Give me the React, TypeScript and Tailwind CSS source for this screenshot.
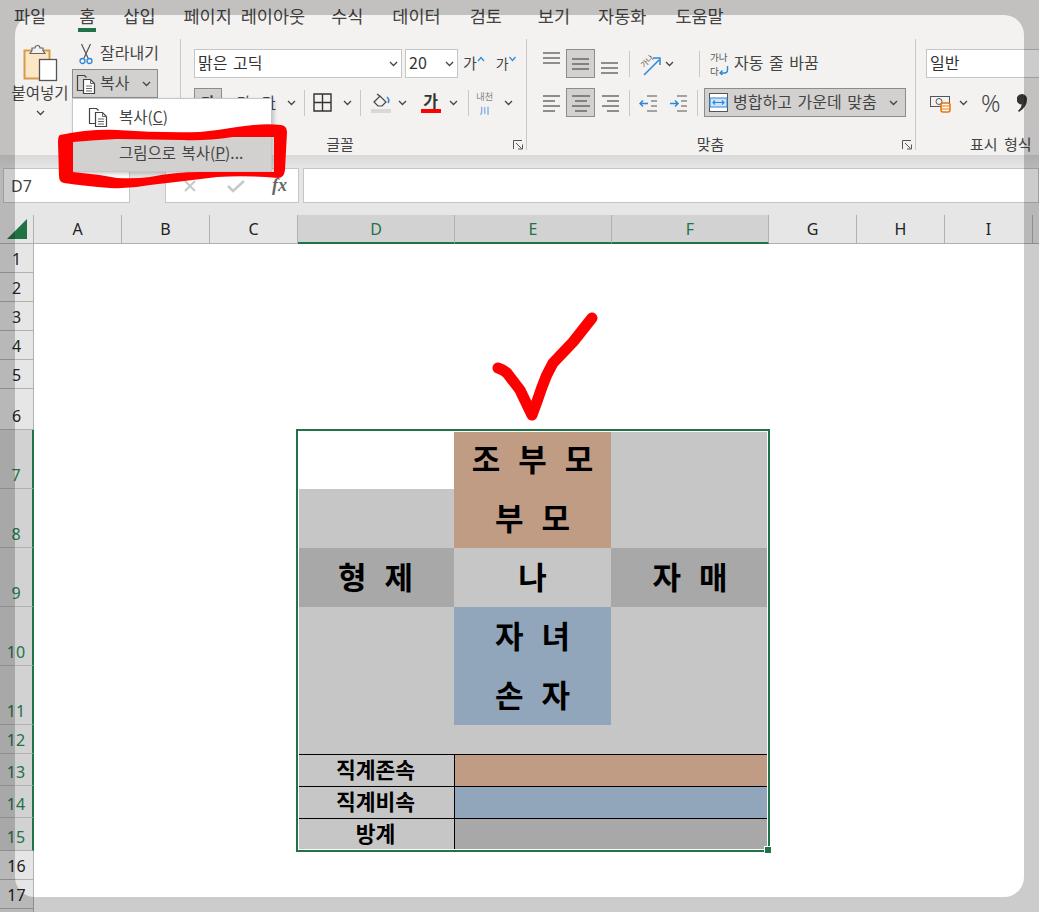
import type { ReactNode } from 'react'

const GREEN = '#217346'

const tabs = [
  { label: '파일', gap: 'ml-0' },
  { label: '홈', gap: 'ml-[33px]' },
  { label: '삽입', gap: 'ml-[28px]' },
  { label: '페이지 레이아웃', gap: 'ml-[28px]' },
  { label: '수식', gap: 'ml-[26px]' },
  { label: '데이터', gap: 'ml-[29px]' },
  { label: '검토', gap: 'ml-[29px]' },
  { label: '보기', gap: 'ml-[36px]' },
  { label: '자동화', gap: 'ml-[28px]' },
  { label: '도움말', gap: 'ml-[29px]' },
]
const columns = ['A', 'B', 'C', 'D', 'E', 'F', 'G', 'H', 'I']
const rowNumbers = [1, 2, 3, 4, 5, 6, 7, 8, 9, 10, 11, 12, 13, 14, 15, 16, 17, 18]

function Chevron({ className = '' }: { className?: string }) {
  return (
    <svg width="9" height="6" viewBox="0 0 9 6" className={`shrink-0 ${className}`}>
      <path d="M1 1l3.5 3.5L8 1" fill="none" stroke="#444" strokeWidth="1.3" />
    </svg>
  )
}

function Lines({ rows, width = 20 }: { rows: number[][]; width?: number }) {
  return (
    <svg width={width} height="20" viewBox={`0 0 ${width} 20`} className="shrink-0">
      {rows.map(([x1, x2, y]) => (
        <line key={`${x1}-${y}`} x1={x1} x2={x2} y1={y} y2={y} stroke="#555" strokeWidth="1.3" />
      ))}
    </svg>
  )
}

function CopyIcon() {
  return (
    <svg width="21" height="20" viewBox="0 0 21 20" className="shrink-0">
      <path d="M7 16.5H1.5V1.5h7l2 2" fill="none" stroke="#444" strokeWidth="1.2" />
      <path d="M7.5 5.5h7l4 4v10h-11z" fill="#fff" stroke="#444" strokeWidth="1.2" />
      <path d="M14.5 5.5v4h4M10 12h6M10 14.500h6M10 17h6" fill="none" stroke="#666" strokeWidth="1" />
    </svg>
  )
}

function PasteIcon() {
  return (
    <svg width="35" height="38" viewBox="0 0 35 38">
      <rect x="1.500" y="6.500" width="25" height="28" fill="#fbe7c3" stroke="#d99a4e" strokeWidth="2" />
      <path d="M9 6.500V4h3a2.500 2.500 0 0 1 5 0h3v2.500l2 3H7z" fill="#f3f2f1" stroke="#666" strokeWidth="1.2" />
      <rect x="16.500" y="15.500" width="17" height="21" fill="#fff" stroke="#555" strokeWidth="1.3" />
    </svg>
  )
}

function ScissorsIcon() {
  return (
    <svg width="14" height="22" viewBox="0 0 14 22" className="shrink-0">
      <path d="M2.500 1l6.500 14M11.500 1L5 15" fill="none" stroke="#555" strokeWidth="1.2" />
      <circle cx="3.500" cy="18" r="2.500" fill="none" stroke="#2b88d8" strokeWidth="1.3" />
      <circle cx="10.500" cy="18" r="2.500" fill="none" stroke="#2b88d8" strokeWidth="1.3" />
    </svg>
  )
}

function Launcher() {
  return (
    <svg width="10" height="10" viewBox="0 0 10 10">
      <path d="M.5 9V.5H9M3 3l5.500 5.500M5 9h4.500V4.500" fill="none" stroke="#555" strokeWidth="1" />
    </svg>
  )
}

function Group({ width, label, labelClass = '', children }: { width: string; label: string; labelClass?: string; children: ReactNode }) {
  return (
    <div className={`flex h-[111px] shrink-0 flex-col border-r border-[#c8c8c8] ${width}`}>
      <div className="flex-1">{children}</div>
      <div className="-mb-[5px] grid grid-cols-[1fr_auto_1fr] items-center pb-[1px] pr-[3px] text-[15px] leading-[20px] text-[#444]">
        <span />
        <span className={labelClass}>{label}</span>
        <span className="flex justify-end pt-[2px]"><Launcher /></span>
      </div>
    </div>
  )
}

function Combo({ width, text, chevron = true }: { width: string; text: string; chevron?: boolean }) {
  return (
    <div className={`flex h-[29px] items-center justify-between border border-[#c6c6c6] bg-white pl-[3px] pr-[3px] text-[16px] text-[#333] ${width}`}>
      <span className="-mt-[3px] [word-spacing:2px]">{text}</span>
      {chevron && <Chevron />}
    </div>
  )
}

function ClipboardGroup() {
  return (
    <Group width="w-[181px]" label="클립보드">
      <div className="flex pt-[5px]">
        <div className="flex w-[72px] flex-col items-center pl-[8px] text-[15.500px] text-[#444]">
          <PasteIcon />
          <span className="-mt-px leading-[22px]">붙여넣기</span>
          <Chevron className="mt-[7px]" />
        </div>
        <div className="flex flex-col">
          <div className="flex h-[25px] items-center gap-[7px] pb-[6px] pl-[7px] text-[16px] text-[#444]">
            <ScissorsIcon />
            <span className="-mt-[4px]">잘라내기</span>
          </div>
          <div className="flex h-[29px] w-[86px] items-center border border-[#8c8c8c] bg-[#d2d1d0] pl-[3px] text-[16px] text-[#444]">
            <CopyIcon />
            <span className="-mt-[3px] ml-[3px]">복사</span>
            <Chevron className="ml-[13px]" />
          </div>
        </div>
      </div>
    </Group>
  )
}

function FontGroup() {
  return (
    <Group width="w-[346px]" label="글꼴" labelClass="-translate-x-[12px]">
      <div className="flex flex-col pl-[13px] pt-[10px]">
        <div className="flex items-center">
          <Combo width="w-[208px]" text="맑은 고딕" />
          <Combo width="ml-[3px] w-[53px]" text="20" />
          <span className="ml-[5px] text-[15px] text-[#444]">가</span>
          <svg width="8" height="6" viewBox="0 0 8 6" className="mb-[10px]"><path d="M1 5l3-3.500 3 3.500" fill="none" stroke="#2b88d8" strokeWidth="1.2" /></svg>
          <span className="ml-[11px] text-[14px] text-[#444]">가</span>
          <svg width="7" height="6" viewBox="0 0 7 6" className="mb-[10px]"><path d="M.5 1l3 3.500 3-3.500" fill="none" stroke="#2b88d8" strokeWidth="1.2" /></svg>
        </div>
        <div className="mt-[10px] flex h-[29px] items-center text-[15px] text-[#444]">
          <div className="flex h-[29px] w-[28px] items-center justify-center border border-[#8c8c8c] bg-[#d2d1d0] font-bold">가</div>
          <span className="ml-[12px] italic">가</span>
          <span className="ml-[14px] underline">가</span>
          <Chevron className="ml-[11px]" />
          <div className="ml-[8px] h-[26px] w-px bg-[#c8c8c8]" />
          <svg width="19" height="19" viewBox="0 0 19 19" className="ml-[8px]">
            <path d="M1 1h17v17H1zM9.500 1v17M1 9.500h17" fill="none" stroke="#333" strokeWidth="1.4" />
          </svg>
          <Chevron className="ml-[11px]" />
          <div className="ml-[8px] h-[26px] w-px bg-[#c8c8c8]" />
          <div className="ml-[10px] flex w-[20px] flex-col items-center">
            <svg width="20" height="15" viewBox="0 0 20 15">
              <path d="M3 9l6-6 6 6-4 4H7zM6 1l4 3" fill="none" stroke="#444" strokeWidth="1.200" />
              <path d="M16 4q3 3 1 6" fill="none" stroke="#2b88d8" strokeWidth="1.600" />
            </svg>
            <div className="mt-[1px] h-[4px] w-[20px] bg-[#d8d8d8]" />
          </div>
          <Chevron className="ml-[7px]" />
          <div className="ml-[14px] flex w-[20px] flex-col items-center">
            <span className="text-[16px] font-bold leading-[15px] text-[#333]">가</span>
            <div className="mt-[1px] h-[4px] w-[20px] bg-[#ff0000]" />
          </div>
          <Chevron className="ml-[8px]" />
          <div className="ml-[10px] h-[26px] w-px bg-[#c8c8c8]" />
          <div className="ml-[6px] flex w-[20px] flex-col items-center">
            <span className="text-[9.500px] leading-[14px] text-[#888]">내천</span>
            <span className="text-[9.500px] leading-[14px] text-[#2b88d8]">川</span>
          </div>
          <Chevron className="ml-[9px]" />
        </div>
      </div>
    </Group>
  )
}

function AlignButton({ active = false, children }: { active?: boolean; children: ReactNode }) {
  return (
    <div className={`flex h-[29px] w-[29px] items-center justify-center border ${active ? 'border-[#8c8c8c] bg-[#d2d1d0]' : 'border-transparent'}`}>
      {children}
    </div>
  )
}

function AlignGroup() {
  return (
    <Group width="w-[389px]" label="맞춤" labelClass="-translate-x-[9px]">
      <div className="flex flex-col pl-[10px] pt-[10px]">
        <div className="flex h-[29px] items-center">
          <AlignButton><div className="-mt-[10px]"><Lines rows={[[1, 18, 4], [1, 18, 9], [1, 18, 14]]} /></div></AlignButton>
          <AlignButton active><Lines rows={[[1, 18, 5], [1, 18, 10], [1, 18, 15]]} /></AlignButton>
          <AlignButton><div className="mt-[9px]"><Lines rows={[[1, 18, 5], [1, 18, 10], [1, 18, 15]]} /></div></AlignButton>
          <div className="ml-[5px] h-[26px] w-px bg-[#c8c8c8]" />
          <svg width="24" height="24" viewBox="0 0 24 24" className="ml-[7px] overflow-visible">
            <text x="7" y="16" fontSize="7.500" fill="#555" transform="rotate(-45 7 16)">가나</text>
            <path d="M7 23L22 8M16 6h7v7" fill="none" stroke="#2b88d8" strokeWidth="1.500" />
          </svg>
          <Chevron className="ml-[4px]" />
          <div className="ml-[25px] h-[26px] w-px bg-[#c8c8c8]" />
          <div className="ml-[10px] flex w-[20px] flex-col text-[9.500px] leading-[14px] text-[#555]">
            <span>가나</span>
            <span className="flex items-center">다
              <svg width="10" height="9" viewBox="0 0 10 9"><path d="M8.500 0v4q0 3-3 3H1.500M3.500 4.500L1 7l2.500 2" fill="none" stroke="#2b88d8" strokeWidth="1.400" /></svg>
            </span>
          </div>
          <span className="-mt-[3px] ml-[4px] text-[16px] text-[#444] [word-spacing:2px]">자동 줄 바꿈</span>
        </div>
        <div className="mt-[10px] flex h-[29px] items-center">
          <AlignButton><Lines rows={[[1, 18, 3], [1, 13, 8], [1, 18, 13], [1, 13, 18]]} /></AlignButton>
          <AlignButton active><Lines rows={[[1, 19, 3], [4, 16, 8], [1, 19, 13], [4, 16, 18]]} /></AlignButton>
          <AlignButton><Lines rows={[[2, 19, 3], [7, 19, 8], [2, 19, 13], [7, 19, 18]]} /></AlignButton>
          <div className="ml-[5px] h-[26px] w-px bg-[#c8c8c8]" />
          <svg width="19" height="20" viewBox="0 0 19 20" className="ml-[9px]">
            <path d="M8 3h10M12 8h6M12 13h6M8 18h10" stroke="#555" strokeWidth="1.200" />
            <path d="M9 10.500H1M4 7.500l-3 3 3 3" fill="none" stroke="#2b88d8" strokeWidth="1.500" />
          </svg>
          <svg width="19" height="20" viewBox="0 0 19 20" className="ml-[11px]">
            <path d="M8 3h10M12 8h6M12 13h6M8 18h10" stroke="#555" strokeWidth="1.200" />
            <path d="M1 10.500h8M6 7.500l3 3-3 3" fill="none" stroke="#2b88d8" strokeWidth="1.500" />
          </svg>
          <div className="ml-[9px] h-[26px] w-px bg-[#c8c8c8]" />
          <div className="ml-[6px] flex h-[29px] w-[202px] items-center border border-[#8c8c8c] bg-[#d2d1d0] pl-[4px] text-[16px] text-[#444]">
            <svg width="19" height="19" viewBox="0 0 19 19" className="shrink-0">
              <rect x=".5" y=".5" width="18" height="18" fill="#fff" stroke="#555" />
              <rect x="1" y="5" width="17" height="9" fill="#cfe4f7" stroke="#2b88d8" />
              <path d="M4 9.500h11M6 7.500l-2 2 2 2M13 7.500l2 2-2 2" fill="none" stroke="#2b88d8" strokeWidth="1.100" />
            </svg>
            <span className="-mt-[3px] ml-[5px] [word-spacing:2px]">병합하고 가운데 맞춤</span>
            <Chevron className="ml-auto mr-[7px]" />
          </div>
        </div>
      </div>
    </Group>
  )
}

function NumberGroup() {
  return (
    <div className="flex h-[111px] w-[124px] shrink-0 flex-col">
      <div className="flex-1 pl-[10px] pt-[10px]">
        <Combo width="w-[140px]" text="일반" chevron={false} />
        <div className="mt-[10px] flex h-[29px] items-center">
          <svg width="21" height="20" viewBox="0 0 21 20" className="ml-[4px] shrink-0">
            <rect x=".5" y="3.500" width="19" height="10" fill="none" stroke="#555" />
            <circle cx="9" cy="8.500" r="3" fill="none" stroke="#555" />
            <rect x="11" y="10" width="9" height="9" rx="2" fill="#fff" stroke="#e8750a" strokeWidth="1.500" />
            <path d="M11 13h9M11 16h9" stroke="#e8750a" />
          </svg>
          <Chevron className="ml-[8px]" />
          <span className="ml-[13px] font-['Noto_Sans',sans-serif] text-[24px] font-light leading-none text-[#444]">%</span>
          <svg width="10" height="18" viewBox="0 0 10 18" className="ml-[16px] shrink-0">
            <path d="M5 0a5 5 0 0 1 5 5.500Q10 13 2 18l-1-1.200Q4.500 14 4.800 10.500A5 5 0 0 1 5 0z" fill="#333" />
          </svg>
        </div>
      </div>
      <div className="-mb-[5px] pb-[1px] pl-[54px] text-[15px] leading-[20px] text-[#444] [word-spacing:3px] whitespace-nowrap">표시 형식</div>
    </div>
  )
}

function SheetCell({ className, children }: { className: string; children?: ReactNode }) {
  return (
    <div className={`flex items-center justify-center text-[#000] ${className}`}>
      {children}
    </div>
  )
}

const bigText = 'pb-[3px] text-[31px] font-bold [word-spacing:11px]'
const legendText = 'pb-[3px] text-[21.500px] font-bold'

function Sheet() {
  return (
    <div className="grid grid-cols-[34px_87px_88px_88px_157px_157px_158px_88px_88px_88px_6px] grid-rows-[29px_29px_29px_29px_29px_41px_59px_59px_59px_59px_59px_29px_32px_32px_33px_29px_29px_29px] bg-white">
      {rowNumbers.map((n) => {
        const selected = n >= 7 && n <= 15
        return (
          <div
            key={n}
            className={`col-start-1 flex items-end justify-center border-b border-[#b1b1b1] pb-[2px] font-['Noto_Sans',sans-serif] text-[16px] leading-[22px] ${
              selected ? 'border-r-2 border-r-[#217346] bg-[#d2d2d2] text-[#217346]' : 'border-r border-r-[#b1b1b1] bg-[#e6e6e6] text-[#222]'
            }`}
          >
            {n <= 17 && n}
          </div>
        )
      })}

      {/* table in D7:F15 */}
      <SheetCell className="col-start-5 row-start-7 bg-white" />
      <SheetCell className="col-start-5 row-start-8 bg-[#c6c6c6]" />
      <SheetCell className={`col-start-6 row-start-7 bg-[#c09c84] ${bigText}`}>조 부 모</SheetCell>
      <SheetCell className={`col-start-6 row-start-8 bg-[#c09c84] ${bigText}`}>부 모</SheetCell>
      <SheetCell className="col-start-7 row-start-7 row-span-2 bg-[#c6c6c6]" />
      <SheetCell className={`col-start-5 row-start-9 bg-[#a8a8a8] ${bigText}`}>형 제</SheetCell>
      <SheetCell className={`col-start-6 row-start-9 bg-[#c6c6c6] ${bigText}`}>나</SheetCell>
      <SheetCell className={`col-start-7 row-start-9 bg-[#a8a8a8] ${bigText}`}>자 매</SheetCell>
      <SheetCell className="col-start-5 row-start-10 row-span-3 bg-[#c6c6c6]" />
      <SheetCell className={`col-start-6 row-start-10 bg-[#92a6bb] ${bigText}`}>자 녀</SheetCell>
      <SheetCell className={`col-start-6 row-start-11 bg-[#92a6bb] ${bigText}`}>손 자</SheetCell>
      <SheetCell className="col-start-6 row-start-12 bg-[#c6c6c6]" />
      <SheetCell className="col-start-7 row-start-10 row-span-3 bg-[#c6c6c6]" />
      <SheetCell className={`col-start-5 row-start-13 border-t border-black bg-[#c6c6c6] ${legendText}`}>직계존속</SheetCell>
      <SheetCell className="col-start-6 col-span-2 row-start-13 border-l border-t border-black bg-[#c09c84]" />
      <SheetCell className={`col-start-5 row-start-14 border-t border-black bg-[#c6c6c6] ${legendText}`}>직계비속</SheetCell>
      <SheetCell className="col-start-6 col-span-2 row-start-14 border-l border-t border-black bg-[#92a6bb]" />
      <SheetCell className={`col-start-5 row-start-15 border-t border-black bg-[#c6c6c6] ${legendText}`}>방계</SheetCell>
      <SheetCell className="col-start-6 col-span-2 row-start-15 border-l border-t border-black bg-[#a8a8a8]" />

      {/* selection */}
      <div className="pointer-events-none relative col-start-5 col-end-8 row-start-7 row-end-16 -m-px border-2 border-[#217346]">
        <div className="h-full w-full border border-white" />
        <div className="absolute -bottom-[4px] -right-[4px] h-2 w-2 border border-white bg-[#217346]" />
      </div>
    </div>
  )
}

export default function App() {
  return (
    <div className="relative h-[912px] w-[1039px] overflow-hidden bg-white font-['Noto_Sans_CJK_KR',sans-serif]">
      {/* tab bar */}
      <div className="flex h-[34px] items-start bg-[#f3f2f1] pl-[14px] pt-[3px] text-[17.500px] leading-[25px] text-[#444]">
        {tabs.map((tab) => (
          <div key={tab.label} className={`relative whitespace-nowrap [word-spacing:5px] ${tab.gap}`}>
            {tab.label}
            {tab.label === '홈' && <div className="absolute -left-px -right-px top-[25px] h-[4px] bg-[#217346]" />}
          </div>
        ))}
      </div>

      {/* ribbon */}
      <div className="flex h-[121px] overflow-hidden bg-[#f3f2f1] pt-[5px]">
        <ClipboardGroup />
        <FontGroup />
        <AlignGroup />
        <NumberGroup />
      </div>
      <div className="h-[13px] bg-gradient-to-b from-[#d9d9d9] to-[#e6e6e6]" />

      {/* formula bar */}
      <div className="flex h-[47px] items-start bg-[#e6e6e6] pl-[3px]">
        <div className="flex h-[35px] w-[127px] items-center border border-[#c6c6c6] bg-white pl-[7px] pt-px font-['Noto_Sans',sans-serif] text-[16px] text-[#444]">D7</div>
        <div className="ml-[35px] flex h-[35px] w-[134px] items-center border border-[#c6c6c6] bg-white">
          <svg width="16" height="14" viewBox="0 0 16 14" className="ml-[16px]"><path d="M3 2l10 10M13 2L3 12" stroke="#c8c8c8" strokeWidth="2" /></svg>
          <svg width="18" height="14" viewBox="0 0 18 14" className="ml-[29px]"><path d="M1 7l5 5L17 2" fill="none" stroke="#c8c8c8" strokeWidth="2.500" /></svg>
          <span className="ml-[27px] font-['Liberation_Serif',serif] text-[18px] font-bold italic text-[#666]">fx</span>
        </div>
        <div className="ml-[4px] h-[35px] flex-1 border border-[#c6c6c6] bg-white" />
      </div>

      {/* column headers */}
      <div className="grid h-[29px] grid-cols-[34px_88px_88px_88px_157px_157px_157px_88px_88px_88px_6px] bg-[#e6e6e6]">
        <div className="flex items-center justify-center border-b border-r border-[#b1b1b1]">
          <svg width="20" height="20" viewBox="0 0 20 20"><path d="M20 0v20H0z" fill={GREEN} /></svg>
        </div>
        {columns.map((col) => {
          const selected = col === 'D' || col === 'E' || col === 'F'
          return (
            <div
              key={col}
              className={`flex items-center justify-center border-r font-['Noto_Sans',sans-serif] text-[16px] ${
                selected ? 'border-b-2 border-r-[#b1b1b1] border-b-[#217346] bg-[#d2d2d2] text-[#217346]' : 'border-b border-[#b1b1b1] text-[#222]'
              }`}
            >
              {col}
            </div>
          )
        })}
        <div className="border-b border-[#b1b1b1]" />
      </div>

      <Sheet />

      {/* copy dropdown */}
      <div className="absolute left-[72px] top-[98px] h-[74px] w-[200px] border border-[#c6c6c6] bg-white text-[15.500px] text-[#444] shadow-[2px_2px_4px_rgba(0,0,0,0.2)]">
        <div className="flex h-[36px] items-center pl-[15px]">
          <CopyIcon />
          <span className="ml-[10px]">복사(<span className="underline">C</span>)</span>
        </div>
        <div className="flex h-[36px] items-center bg-[#d2d1d0] pl-[46px] [word-spacing:2px]">
          <span>그림으로 복사(<span className="underline">P</span>)...</span>
        </div>
      </div>

      {/* red marker */}
      <svg width="1039" height="912" viewBox="0 0 1039 912" className="pointer-events-none absolute left-0 top-0">
        <path
          fillRule="evenodd"
          fill="#ff0000"
          d="M60 135Q88 129 117 130Q160 133 200 132Q220 130 237 127Q262 123 281 125Q287 126 287 132L285 170Q284 178 278 178Q245 175 217 177Q185 181 150 185Q130 189 110 188Q85 186 64 183Q59 182 59 176L58 142Q58 136 60 135ZM73 142L73 172Q95 174 117 178Q135 179 150 177Q175 172 200 172L250 172L274 172L274 137L233 137Q205 141 183 140L117 139Q95 140 73 142Z"
        />
        <path
          d="M498 368Q504 370 507 373L520 390L532 415Q537 402 542 387Q546 375 553 363L573 342L592 318"
          fill="none"
          stroke="#ff0000"
          strokeWidth="11"
          strokeLinecap="round"
          strokeLinejoin="round"
        />
      </svg>

      {/* screenshot frame dimming */}
      <div className="pointer-events-none absolute left-[15px] top-[15px] h-[882px] w-[1009px] rounded-[20px] shadow-[0_0_0_100px_rgba(0,0,0,0.2)]" />
    </div>
  )
}
